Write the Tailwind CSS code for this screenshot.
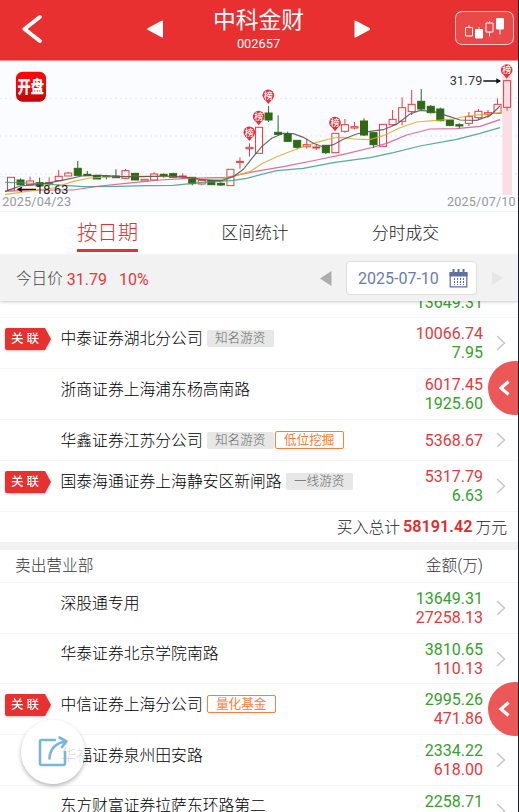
<!DOCTYPE html>
<html lang="zh-CN">
<head>
  <meta charset="UTF-8" />
  <meta name="viewport" content="width=device-width, initial-scale=1.0"/>
  <title>中科金财 002657</title>
  <script src="https://cdn.jsdelivr.net/npm/@tailwindcss/browser@4"></script>
</head>
<body class="bg-white font-['Roboto','Noto_Sans_CJK_SC',sans-serif] text-[#222]">

  <div class="relative w-[519px] h-[812px] overflow-hidden bg-white border-r border-[#1b1b2e] flex flex-col">

    <!-- Header -->
    <header class="h-[60px] shrink-0 bg-[#e93030] text-white flex items-center pl-[22px] pr-1">
      <svg class="w-5 h-[30px] mt-[-3px]" viewBox="0 0 20 30" fill="none" stroke="#fff" stroke-width="4" stroke-linecap="round" stroke-linejoin="round"><path d="M17.8 3 2.5 15l15.3 12"/></svg>
      <div class="flex items-center ml-[105px]">
        <svg class="w-4 h-[18px] mt-[-3px]" viewBox="0 0 16 18" fill="#fff"><path d="M16 .5v17Q15 17.500 14 17L1 10Q-.5 9 1 8L14 1Q15 .5 16 .5Z"/></svg>
        <div class="w-[191px] text-center">
          <h1 class="text-[22.8px] leading-[28px] mt-[-2px]">中科金财</h1>
          <p class="text-[12.8px] leading-[15px] pt-px">002657</p>
        </div>
        <svg class="w-4 h-[18px] mt-[-3px]" viewBox="0 0 16 18" fill="#fff"><path d="M.5 .5v17Q1.500 17.500 2.500 17L15.500 10Q17 9 15.500 8L2.500 1Q1.500 .5 .5 .5Z"/></svg>
      </div>
      <div class="ml-auto w-[59px] h-[34px] mt-[-4px] rounded-[7px] border border-white/70 bg-white/12 flex items-center justify-center">
        <svg class="w-[41px] h-[22px]" viewBox="0 0 41 22" fill="none" stroke="#fff">
          <path d="M1.500 10.500h7v8.500h-7zM5 8v2.500M22 6h7v9h-7zM25.500 4v2M25.500 15v4.500"/>
          <path fill="#fff" d="M11.500 12.500h7v8.500h-7zM15 10v2M32.500 1.500h7v10.500h-7zM36 12v5.500"/>
        </svg>
      </div>
    </header>

    <!-- K line chart -->
    <section class="h-[152px] shrink-0 bg-[#fbfcff] border-t border-[#f98b8b] border-b border-b-[#f1f1f1]">
      <svg class="block w-[518px] h-[150px]" viewBox="0 3 1554 450">
        <defs>
          <linearGradient id="badge" x2="0" y2="1"><stop offset=".4" stop-color="#fb0508"/><stop offset="1" stop-color="#bb0508"/></linearGradient>
        </defs>
        <g stroke="#e4e6ee" stroke-width="3" stroke-dasharray="6 9">
          <path d="M0 115H1554M0 228H1554M0 342H1554"/>
        </g>
        <rect x="1507" y="30" width="29" height="375" fill="#f9dfe5"/>
        <g id="candles" stroke-width="3"></g>
        <g id="averages" fill="none" stroke-width="3.500"></g>
        <g id="pins" font-size="27" font-weight="500" fill="#fff" text-anchor="middle"></g>
        <rect x="48" y="35" width="90" height="90" rx="20" fill="url(#badge)"/>
        <text transform="translate(92 98) scale(.9 1.2)" fill="#fff" font-size="44" font-weight="900" text-anchor="middle">开盘</text>
        <g fill="none" stroke="#111" stroke-width="4">
          <path d="M54 388H108M66 382 54 388 66 394M1450 63H1500"/>
          <path fill="#111" stroke="none" d="M1489 55 1503 63 1489 71Z"/>
        </g>
        <text x="108" y="401" font-size="38" fill="#222" textLength="97">18.63</text>
        <text x="1349" y="76" font-size="38" fill="#333" textLength="98">31.79</text>
        <g font-size="38" fill="#999">
          <text x="7" y="438" textLength="206">2025/04/23</text>
          <text x="1341" y="438" textLength="206">2025/07/10</text>
        </g>
      </svg>
    </section>

    <!-- Tabs -->
    <nav class="h-[43px] shrink-0 flex text-[16.8px] font-light text-[#222]">
      <div class="w-[215px] flex justify-center"><span class="h-[40px] leading-[42px] text-[20.4px] text-[#e93030] border-b-[3px] border-[#e93030]">按日期</span></div>
      <div class="w-[80px] leading-[42px] text-center">区间统计</div>
      <div class="w-[221px] leading-[42px] text-center">分时成交</div>
    </nav>

    <!-- Price and date filter -->
    <div class="relative z-10 h-[46px] shrink-0 bg-[#f2f2f2] shadow-[0_1px_3px_rgba(0,0,0,0.22)] flex items-center pl-4 text-base">
      <span class="text-[15.6px] font-light text-[#444] pt-[3px]">今日价</span>
      <span class="ml-1 text-[#e5393c] pt-[3px]">31.79</span>
      <span class="ml-3 text-[#e5393c] pt-[3px]">10%</span>
      <svg class="ml-auto w-3 h-[15px]" viewBox="0 0 12 15" fill="#adadad"><path d="M0 7.500 11.500 0v15z"/></svg>
      <div class="ml-[14px] w-[131px] h-[34px] bg-white border border-[#dedede] rounded-[4px] flex items-center justify-between pl-[11px] pr-[8px] text-[#6b7bb0]">
        <span class="pt-[2px]">2025-07-10</span>
        <svg class="w-[19px] h-[19px]" viewBox="0 0 19 19" fill="none" stroke="#60709f">
          <path fill="#60709f" stroke="none" d="M.5 3h18v4.500H.5z"/>
          <path stroke-width="1.200" d="M1.200 3.500v14.300h16.600V3.500"/>
          <path stroke-width="2" d="M4.500 0v4M9.500 0v4M14.500 0v4"/>
          <path stroke-dasharray="2 1" d="M5.500 9v7M8.500 9v7M11.500 9v7M14.500 9v7"/>
        </svg>
      </div>
      <svg class="ml-[15px] mr-[15px] w-[11px] h-[14px]" viewBox="0 0 11 14" fill="#e6e6e6"><path d="M0 0v14l11-7z"/></svg>
    </div>

    <!-- Buy side -->
    <div class="h-[17px] shrink-0 border-b border-[#f5f5f5] flex items-end justify-end pr-[35px] pb-[5px] overflow-hidden text-base leading-[19px] text-[#36a02c]">13649.31</div>
    <div id="buyList" class="shrink-0"></div>
    <div class="h-[30px] shrink-0 flex items-center justify-end pr-[11px] pt-px text-[15.8px] font-light text-[#222]">
      买入总计<b class="mx-[3px] text-[16.2px] font-semibold text-[#e5292c]">58191.42</b>万元
    </div>
    <div class="h-2 shrink-0 bg-[#f2f2f2]"></div>

    <!-- Sell side -->
    <div class="h-[33px] shrink-0 border-b border-[#f5f5f5] flex items-center justify-between pl-[15px] pr-[35px] text-[15.7px] font-light text-[#333]">
      <span>卖出营业部</span>
      <span>金额(万)</span>
    </div>
    <div id="sellList" class="shrink-0"></div>

    <!-- Side drawers -->
    <div class="absolute z-20 left-[488px] top-[361px] w-[54px] h-[54px] rounded-full bg-[#ea4546]/90">
      <svg class="ml-[10px] mt-[19px] w-3 h-4" viewBox="0 0 12 16" fill="none" stroke="#fff" stroke-width="3.200"><path d="M10.500 1.500 3 8l7.500 6.500"/></svg>
    </div>
    <div class="absolute z-20 left-[488px] top-[682px] w-[54px] h-[54px] rounded-full bg-[#ea4546]/90">
      <svg class="ml-[10px] mt-[19px] w-3 h-4" viewBox="0 0 12 16" fill="none" stroke="#fff" stroke-width="3.200"><path d="M10.500 1.500 3 8l7.500 6.500"/></svg>
    </div>

    <!-- Share button -->
    <div class="absolute z-20 left-[21px] top-[720px] w-16 h-16 rounded-full bg-white/85 shadow-[0_2px_4px_rgba(0,0,0,0.3)]">
      <svg class="ml-[16px] mt-[15px] w-8 h-8" viewBox="0 0 32 32" fill="none" stroke="#78b7da" stroke-width="2.600" stroke-linecap="round" stroke-linejoin="round">
        <path d="M18 5H4.500Q3 5 3 6.500v22Q3 30 4.500 30h22Q28 30 28 28.500V17"/>
        <path d="M12.500 23.500C13 14 18 8 29 6.500M22.500 2.500 29.500 6.500 25 12"/>
      </svg>
    </div>
  </div>

  <script>
    // [top, bottom, high, low, type] in chart units, type: r hollow, g solid
    const candles = [
      [352,390,352,390,"r"],[360,374,355,376,"g"],[363,374,350,376,"r"],[368,378,353,380,"g"],[368,371,352,378,"r"],
      [349,362,330,362,"r"],[339,348,336,348,"r"],[325,346,303,346,"g"],[343,346,333,346,"g"],[346,357,346,357,"g"],
      [348,350,345,358,"g"],[348,353,328,353,"g"],[332,355,327,357,"r"],[340,360,340,360,"g"],[358,363,358,363,"r"],
      [342,360,337,360,"r"],[343,347,340,353,"g"],[341,352,338,352,"g"],[348,350,340,357,"r"],[352,371,352,376,"g"],
      [361,372,361,376,"r"],[361,374,361,374,"g"],[370,375,366,378,"g"],[328,377,328,377,"r"],[304,307,292,326,"r"],
      [262,266,250,290,"r"],[202,280,202,280,"r"],[159,180,138,186,"g"],[217,223,166,226,"g"],[222,244,215,246,"g"],
      [241,262,241,268,"g"],[254,260,236,266,"r"],[261,264,252,270,"r"],[256,278,256,282,"g"],[220,278,220,278,"r"],
      [194,214,177,218,"r"],[200,204,186,208,"r"],[183,225,175,228,"g"],[218,254,218,264,"g"],[193,259,193,259,"r"],
      [178,194,150,197,"r"],[143,184,112,196,"r"],[133,155,90,165,"r"],[124,147,87,150,"g"],[139,158,135,160,"g"],
      [147,182,143,184,"g"],[180,196,180,199,"g"],[194,198,190,205,"g"],[170,190,156,198,"r"],[154,173,147,178,"r"],
      [158,163,150,173,"r"],[133,160,115,160,"r"],[62,142,62,152,"r"]
    ];
    const averages = [
      ["#3d9d84", [15,367,80,369,150,373,250,380,350,379,440,377,520,376,600,368,700,361,740,355,830,332,910,325,1000,308,1110,293,1180,278,1260,258,1370,238,1440,220,1500,203]],
      ["#d9548c", [15,394,80,391,150,390,220,390,300,378,400,368,480,360,560,355,680,352,750,337,850,320,950,300,1030,283,1110,264,1160,250,1220,225,1290,207,1370,206,1440,199,1500,179]],
      ["#ddaa25", [15,404,80,394,160,384,220,364,270,354,350,349,440,349,520,350,600,357,660,358,700,349,750,335,785,311,830,290,890,267,950,247,1000,234,1030,232,1060,237,1110,239,1150,227,1200,203,1250,186,1310,181,1360,177,1400,168,1450,163,1500,158]],
      ["#505055", [15,394,60,378,110,374,150,368,200,358,245,348,300,346,360,350,430,350,510,348,560,352,600,358,640,362,665,362,700,350,730,328,760,290,785,260,815,235,850,220,880,221,910,232,940,250,970,261,1000,254,1030,238,1070,222,1110,214,1150,209,1190,193,1230,162,1260,151,1300,154,1340,167,1380,180,1430,181,1470,167,1500,138]]
    ];
    const pins = [[748,217],[776,170],[805,106],[1005,188],[1520,30]];

    document.getElementById("candles").innerHTML = candles.map(([t, b, h, l, type], i) => {
      const x = 33 + 28.62 * i;
      const color = type === "g" ? "#2c6a14" : "#ee3a3e";
      return `<g stroke="${color}" fill="${type === "g" ? color : "none"}">
        <path d="M${x} ${h}V${t}M${x} ${b}V${l}"/><rect x="${x - 10.5}" y="${t}" width="21" height="${b - t}"/></g>`;
    }).join("");

    document.getElementById("averages").innerHTML = averages.map(([color, p]) =>
      `<polyline stroke="${color}" stroke-opacity=".85" points="${p.join(" ")}"/>`).join("");

    document.getElementById("pins").innerHTML = pins.map(([x, y]) =>
      `<circle cx="${x}" cy="${y}" r="17.500" fill="#e62e33"/><path fill="#e62e33" d="M${x - 10} ${y + 13}h20l-10 13z"/><text x="${x}" y="${y + 10}">榜</text>`).join("");

    const buys = [
      { name: "中泰证券湖北分公司", linked: true, tags: ["知名游资"], buy: "10066.74", sell: "7.95" },
      { name: "浙商证券上海浦东杨高南路", buy: "6017.45", sell: "1925.60" },
      { name: "华鑫证券江苏分公司", tags: ["知名游资"], hot: "低位挖掘", buy: "5368.67" },
      { name: "国泰海通证券上海静安区新闸路", linked: true, tags: ["一线游资"], buy: "5317.79", sell: "6.63" }
    ];
    const sells = [
      { name: "深股通专用", sell: "13649.31", buy: "27258.13" },
      { name: "华泰证券北京学院南路", sell: "3810.65", buy: "110.13" },
      { name: "中信证券上海分公司", linked: true, hot: "量化基金", sell: "2995.26", buy: "471.86" },
      { name: "华福证券泉州田安路", sell: "2334.22", buy: "618.00" },
      { name: "东方财富证券拉萨东环路第二", sell: "2258.71", buy: "\u00a0" }
    ];

    function renderRows(id, rows, sellFirst) {
      const tall = sellFirst ? "h-[50.7px]" : "h-[51px]";
      document.getElementById(id).innerHTML = rows.map(r => {
        const red = r.buy ? `<div class="text-[#e5393c]">${r.buy}</div>` : "";
        const green = r.sell ? `<div class="text-[#36a02c]">${r.sell}</div>` : "";
        const linked = r.linked ? `<div class="flex drop-shadow-[0_1px_1px_rgba(0,0,0,0.25)]">
            <span class="w-[40px] h-[22px] rounded-l-[2px] bg-[#e93030] text-white text-[12.500px] font-medium leading-[22px] text-center whitespace-pre">关 联</span>
            <svg class="w-[6px] h-[22px]" viewBox="0 0 6 22" fill="#e93030"><path d="M0 0 6 11 0 22z"/></svg></div>` : "";
        const tags = (r.tags || []).map(t => `<span class="w-[67px] h-[17px] mt-[-1px] mr-px rounded-[2px] bg-[#e7e7e7] text-[#666] font-light text-[12.600px] leading-[16px] text-center">${t}</span>`).join("");
        const hot = r.hot ? `<span class="w-[69px] h-[18px] mt-[-1px] rounded-[2px] border border-[#ff7c3c] text-[#ff7c3c] text-[12.600px] leading-[15px] text-center">${r.hot}</span>` : "";
        return `<div class="${r.buy && r.sell ? tall : "h-[41px]"} flex items-center border-b border-[#f5f5f5] pr-[12px]">
          <div class="self-start h-[41px] flex items-center">
            <div class="w-[60.500px] pl-[5px]">${linked}</div>
            <span class="text-[15.800px] font-light text-black mr-[4px] whitespace-nowrap">${r.name}</span>${tags}${hot}
          </div>
          <div class="ml-auto text-right text-base leading-[19px]">${sellFirst ? green + red : red + green}</div>
          <svg class="ml-[13px] w-[10px] h-4" viewBox="0 0 10 16" fill="none" stroke="#c8c8c8" stroke-width="1.500"><path d="M1 1 8.500 8 1 15"/></svg>
        </div>`;
      }).join("");
    }

    renderRows("buyList", buys, false);
    renderRows("sellList", sells, true);
  </script>
</body>
</html>
